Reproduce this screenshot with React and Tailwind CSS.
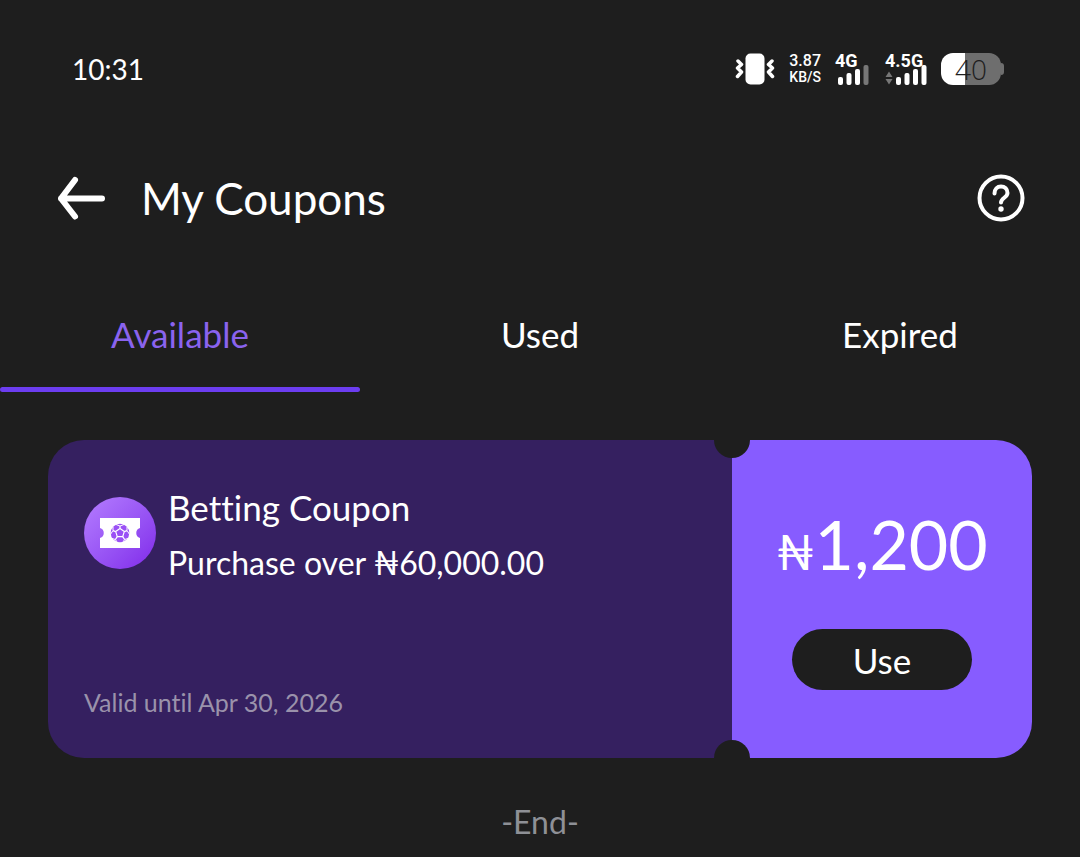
import { useState } from "react";

const tabs = ["Available", "Used", "Expired"];

const coupons = [
  {
    id: 1,
    title: "Betting Coupon",
    condition: "Purchase over ₦60,000.00",
    validUntil: "Apr 30, 2026",
    currency: "₦",
    amount: "1,200",
  },
];

const VibrateIcon = () => (
  <svg width="40" height="32" viewBox="0 0 40 32" fill="none" aria-hidden="true">
    <rect x="10.500" y="0.500" width="19" height="31" rx="5" fill="white" />
    <path
      d="M3 8l3.500 3.500-4 3.500 4 4-4 4.500M37 8l-3.500 3.500 4 3.500-4 4 4 4.500"
      stroke="white"
      strokeWidth="3.500"
      strokeLinecap="round"
      strokeLinejoin="round"
    />
  </svg>
);

const SignalBars = ({ last = "white" }) => (
  <svg width="31" height="20" viewBox="0 0 31 20" aria-hidden="true">
    <rect x="0" y="12" width="5" height="8" rx="2" fill="white" />
    <rect x="8.500" y="8" width="5" height="12" rx="2" fill="white" />
    <rect x="17" y="4" width="5" height="16" rx="2" fill="white" />
    <rect x="25.500" y="0" width="5" height="20" rx="2" fill={last} />
  </svg>
);

const DataArrows = () => (
  <svg width="8" height="14" viewBox="0 0 8 14" aria-hidden="true">
    <path d="M0.500 6L4 0.500 7.500 6zM0.500 8L4 13.500 7.500 8z" fill="#777777" />
  </svg>
);

const BackIcon = () => (
  <svg width="50" height="44" viewBox="0 0 50 44" fill="none" aria-hidden="true">
    <path
      d="M20 4L6 22.500 20 40.500M6 22.500h41"
      stroke="white"
      strokeWidth="6"
      strokeLinecap="round"
      strokeLinejoin="round"
    />
  </svg>
);

const HelpIcon = () => (
  <svg width="48" height="48" viewBox="0 0 48 48" fill="none" aria-hidden="true">
    <circle cx="24" cy="24" r="21.500" stroke="white" strokeWidth="4" />
    <path
      d="M17.500 19.500c0-4.500 2.800-7 6.500-7s6.500 2.500 6.500 6.500c0 4.500-6.500 5-6.500 9.500"
      stroke="white"
      strokeWidth="4"
      strokeLinecap="round"
    />
    <circle cx="24" cy="35" r="2.700" fill="white" />
  </svg>
);

const TicketIcon = () => (
  <svg width="40" height="30" viewBox="0 0 40 30" fill="none" aria-hidden="true">
    <path d="M0 0h40v10c-5 1-5 9 0 10v10H0V20c5-1 5-9 0-10z" fill="white" />
    <circle cx="20" cy="15" r="9.300" fill="#9a50f5" />
    <path d="M20 10.500l4.300 3.100-1.600 5h-5.400l-1.600-5z" stroke="white" strokeWidth="1.200" />
    <path
      d="M20 10.500V8M24.300 13.600l2.700-1M22.700 18.600l2 3M17.300 18.600l-2 3M15.700 13.600l-2.700-1"
      stroke="white"
      strokeWidth="1.200"
    />
    {/* Outer seams of the ball */}
    <path
      d="M16 6.500l4 1.500 4-1.500M27 8.500v4l2.300 3.500M28 20.500l-3.300 1-2 2.800M17.300 24.300l-2-2.800-3.300-1M10.700 16l2.300-3.500v-4"
      stroke="white"
    />
  </svg>
);

const StatusBar = () => (
  <div className="flex h-[138px] items-center justify-between pr-19 pl-18 text-white">
    <span className="text-[28px]">10:31</span>
    <div className="flex items-center">
      <VibrateIcon />
      <div className="ml-[14px] text-center font-['Roboto'] text-base font-medium">
        <div className="leading-4">3.87</div>
        <div className="text-sm leading-4">KB/S</div>
      </div>
      <div className="ml-[14px] flex h-8 w-[34px] flex-col items-end justify-between font-['Roboto'] text-lg leading-3 font-bold">
        <span className="h-3 w-full pt-0.5">4G</span>
        <SignalBars last="#777777" />
      </div>
      <div className="ml-4 flex h-8 w-[42px] flex-col justify-between font-['Roboto'] text-lg leading-3 font-bold">
        <span className="h-3 pt-0.5">4.5G</span>
        <div className="flex items-end justify-between">
          <DataArrows />
          <SignalBars />
        </div>
      </div>
      <div className="ml-[14px] flex items-center">
        <div className="flex h-8 w-[60px] items-center justify-center rounded-xl bg-linear-to-r from-white from-40% to-[#6e6e6e] to-40% font-['Open_Sans'] text-[28px] leading-8 font-light text-[#1e1e1e]">
          40
        </div>
        <div className="h-3 w-[3px] rounded-r bg-[#6e6e6e]" />
      </div>
    </div>
  </div>
);

const CouponCard = ({ coupon }) => (
  <article className="relative flex h-[318px] overflow-hidden rounded-[36px] text-white">
    <div className="flex flex-1 flex-col justify-between bg-[#352060] px-9 pt-[43px] pb-9">
      <div className="flex gap-3">
        <div className="mt-[14px] flex size-18 items-center justify-center rounded-full bg-linear-to-br from-[#b57cff] to-[#8124ea]">
          <TicketIcon />
        </div>
        <div>
          <h2 className="text-[35px] leading-12">{coupon.title}</h2>
          <p className="mt-2 text-[32px] leading-12">{coupon.condition}</p>
        </div>
      </div>
      <p className="text-[25px] leading-10 text-[#9a92ab]">Valid until {coupon.validUntil}</p>
    </div>
    <div className="flex w-[300px] flex-col items-center bg-[#875cff] pt-16">
      <div className="flex items-baseline">
        <span className="text-5xl leading-none">{coupon.currency}</span>
        <span className="text-[68px] leading-20">{coupon.amount}</span>
      </div>
      <button className="mt-[45px] h-[61px] w-[180px] rounded-full bg-[#1e1e1e] text-[35px] leading-12">
        Use
      </button>
    </div>
    {/* Ticket notches */}
    <div className="absolute -top-[18px] right-[282px] size-9 rounded-full bg-[#1e1e1e]" />
    <div className="absolute right-[282px] -bottom-[18px] size-9 rounded-full bg-[#1e1e1e]" />
  </article>
);

const App = () => {
  const [active, setActive] = useState("Available");

  return (
    <div className="min-h-screen bg-[#1e1e1e] font-['Lato','Open_Sans',sans-serif] [font-variant-ligatures:none]">
      <StatusBar />

      <header className="flex h-[120px] items-center px-[55px] text-white">
        <button aria-label="Back">
          <BackIcon />
        </button>
        <h1 className="ml-9 flex-1 text-[44px]">My Coupons</h1>
        <button aria-label="Help">
          <HelpIcon />
        </button>
      </header>

      <nav className="mt-6 grid grid-cols-3">
        {tabs.map((tab) => (
          <button
            key={tab}
            onClick={() => setActive(tab)}
            className={
              tab === active
                ? "flex flex-col items-center text-[35px] text-[#8a63ee]"
                : "flex flex-col items-center text-[35px] text-white"
            }
          >
            <span className="flex h-[105px] items-center">{tab}</span>
            <span
              className={
                tab === active ? "h-[5px] w-full rounded-full bg-[#6c3df0]" : "h-[5px] w-full"
              }
            />
          </button>
        ))}
      </nav>

      <main className="px-12 pt-12">
        {coupons.map((coupon) => (
          <CouponCard key={coupon.id} coupon={coupon} />
        ))}
        <p className="pt-10 text-center text-[32px] leading-12 text-[#8e9096]">-End-</p>
      </main>
    </div>
  );
};

export default App;
